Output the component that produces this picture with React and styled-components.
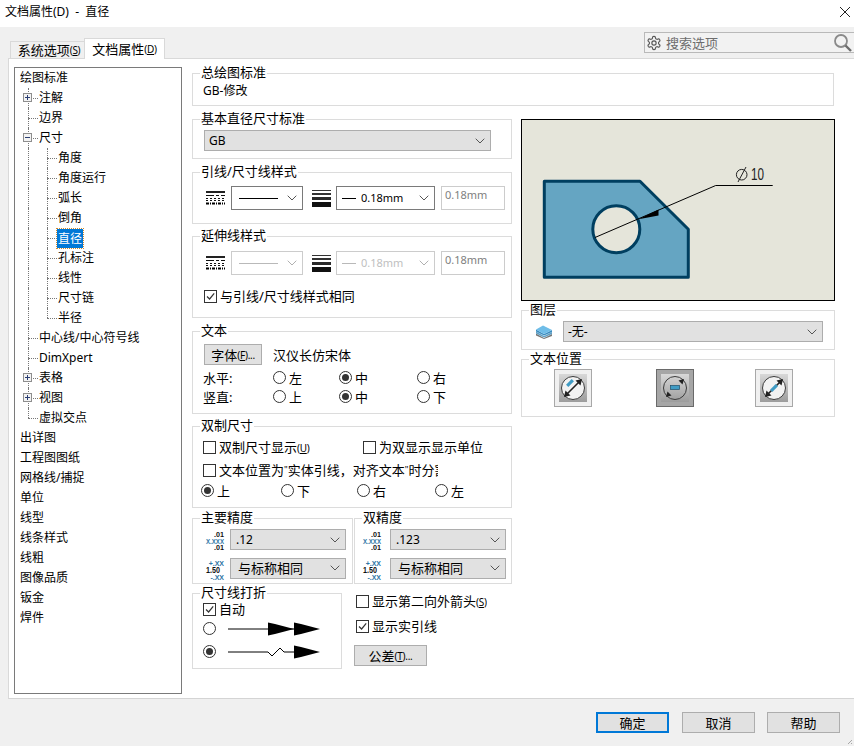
import React from 'react'
import styled, { createGlobalStyle } from 'styled-components'

const GlobalStyle = createGlobalStyle`
  html, body { margin: 0; padding: 0; background: #fff; }
  body {
    width: 854px; height: 746px; overflow: hidden;
    font-family: "Noto Sans", "Noto Sans CJK SC", sans-serif;
    font-size: 13px; color: #000;
  }
  * { box-sizing: border-box; }
`

const Dialog = styled.div`
  width: 854px; height: 746px;
  display: flex; flex-direction: column;
  background: #f0f0f0;
`
const TitleBar = styled.div`
  height: 27px; flex: none; background: #fff;
  display: flex; align-items: center; justify-content: space-between;
  padding: 0 3px 3px 5px; line-height: 16px; font-size: 12px;
  span { white-space: pre; }
`
const TopStrip = styled.div`
  height: 31px; flex: none;
  display: flex; justify-content: space-between; align-items: flex-end;
  padding-left: 10px;
`
const Tabs = styled.div`
  display: flex; align-items: flex-end; margin-bottom: -1px; position: relative; z-index: 1;
`
const Tab = styled.div`
  height: ${p => (p.$active ? 21 : 18)}px;
  width: ${p => (p.$active ? 81 : 74)}px;
  padding-left: ${p => (p.$active ? 0 : 3)}px;
  background: ${p => (p.$active ? '#fff' : '#f0f0f0')};
  border: 1px solid #d9d9d9;
  border-bottom: ${p => (p.$active ? 'none' : '1px solid #d9d9d9')};
  border-right: ${p => (p.$active ? '1px solid #d9d9d9' : 'none')};
  display: flex; align-items: center; justify-content: center;
  line-height: 16px;
`
const Mnemonic = styled.span`
  font-size: 10px; letter-spacing: -0.3px;
  u { text-underline-offset: 1px; }
`
const SearchBox = styled.div`
  width: 210px; height: 21px; margin-bottom: 5px;
  background: #f2f2f2; border: 1px solid #b9b9b9; border-right: none;
  display: flex; align-items: center; padding: 0 2px 0 1px; color: #6d6d6d;
  span { flex: 1; margin-left: 4px; }
`
const Panel = styled.div`
  flex: 1; margin-left: 8px; background: #fff;
  border-top: 1px solid #d9d9d9; border-left: 1px solid #d9d9d9; border-bottom: 1px solid #d4d4d4;
  display: flex; padding: 8px 0 0 5px;
`
const TreeBox = styled.div`
  width: 168px; height: 627px; flex: none;
  border: 1px solid #7a7a7a; font-size: 12px;
`
const TreeRow = styled.div`
  position: relative; height: 20px;
  padding-left: ${p => [5, 24, 43][p.$level]}px;
  display: flex; align-items: center; line-height: 18px; white-space: nowrap;
`
const GuideV = styled.i`
  position: absolute; top: 0; width: 0;
  left: ${p => p.$x}px;
  height: ${p => (p.$half ? 10 : 20)}px;
  border-left: 1px dotted #777;
`
const GuideH = styled.i`
  position: absolute; top: 10px; height: 0;
  left: ${p => p.$x}px; width: 10px;
  border-top: 1px dotted #777;
`
const Expander = styled.b`
  position: absolute; left: 8px; top: 5px; width: 9px; height: 9px;
  background: #f3f3f3; border: 1px solid #8e8e8e; z-index: 1;
  &::before { content: ""; position: absolute; left: 1px; top: 3px; width: 5px; height: 1px; background: #2b3f73; }
  &::after {
    content: ""; position: absolute; left: 3px; top: 1px; width: 1px; height: 5px;
    background: ${p => (p.$open ? 'transparent' : '#2b3f73')};
  }
`
const TreeLabel = styled.span`
  ${p => p.$selected && `
    background: #0078d7; color: #fff; outline: 1px dotted #d08a30;
    padding: 0 1px; margin-left: -1px; line-height: 19px;
  `}
`
const Content = styled.div`
  width: 642px; margin-left: 10px; padding-top: 6px;
`
const Group = styled.div`
  position: relative; flex: none;
  width: ${p => (p.$w ? `${p.$w}px` : 'auto')};
  height: ${p => p.$h}px;
  margin-top: ${p => p.$mt || 0}px;
  border: 1px solid #dcdcdc;
  padding: ${p => p.$pad || '0'};
`
const Legend = styled.div`
  position: absolute; left: 7px; top: -10px; background: #fff; padding: 0 1px; line-height: 16px; white-space: nowrap;
`
const Plain = styled.div`
  height: 100%; display: flex; align-items: center; padding: 0 0 0 10px; font-size: 12px;
`
const Columns = styled.div`
  display: flex; gap: 9px; margin-top: 13px;
`
const Column = styled.div`
  width: ${p => p.$w}px; flex: none;
`
const Select = styled.div`
  width: ${p => p.$w}px; height: ${p => p.$h || 21}px; flex: none;
  display: flex; align-items: center; justify-content: space-between;
  padding: 0 5px ${p => (p.$size ? 2 : 0)}px ${p => p.$indent || 4}px;
  border: 1px solid ${p => (p.$kind === 'white' ? '#7a7a7a' : p.$kind === 'off' ? '#cccccc' : '#adadad')};
  background: ${p => (p.$kind === 'white' || p.$kind === 'off' ? '#fff' : '#e1e1e1')};
  color: ${p => (p.$kind === 'off' ? '#c0c0c0' : '#000')};
  font-size: ${p => p.$size || 12}px;
  line-height: 16px; white-space: nowrap;
`
const LineSample = styled.i`
  display: block; flex: none; height: 1px;
  width: ${p => p.$w}px;
  background: ${p => (p.$off ? '#b9b9b9' : '#000')};
  margin-right: ${p => p.$mr || 0}px;
`
const SelectValue = styled.span`
  flex: 1; display: flex; align-items: center;
`
const StyleRow = styled.div`
  display: flex; align-items: center;
`
const IconSlot = styled.div`
  flex: none; width: ${p => p.$w}px; padding-left: ${p => p.$pl || 0}px;
  display: flex; align-items: center;
`
const ValueInput = styled.div`
  width: 64px; height: 24px; margin-left: 6px; flex: none;
  border: 1px solid #cccccc; background: #fff; color: #808080;
  padding: 0 0 0 3px; line-height: 16px; font-size: 11px;
`
const CheckRow = styled.label`
  display: flex; align-items: center; height: 18px; white-space: nowrap; line-height: 16px;
  width: ${p => (p.$w ? `${p.$w}px` : 'auto')};
  margin-top: ${p => p.$mt || 0}px;
  margin-left: ${p => p.$ml || 0}px;
  overflow: hidden;
`
const Box = styled.span`
  width: 13px; height: 13px; flex: none; margin-right: 3px;
  border: 1px solid #333; background: #fff;
  display: flex; align-items: center; justify-content: center;
`
const Quote = styled.span`
  font-size: 9px; vertical-align: 2px;
`
const RadioItem = styled.label`
  display: flex; align-items: center; height: 19px; white-space: nowrap;
`
const Dot = styled.span`
  width: 13px; height: 13px; flex: none; margin-right: ${p => p.$mr ?? 3}px;
  border-radius: 50%; border: 1px solid #333; background: #fff;
  display: flex; align-items: center; justify-content: center;
  &::after {
    content: ""; width: 7px; height: 7px; border-radius: 50%;
    background: ${p => (p.$on ? '#333' : 'transparent')};
  }
`
const PushButton = styled.div`
  width: ${p => p.$w}px; height: ${p => p.$h || 21}px; flex: none;
  background: #e1e1e1; border: ${p => (p.$primary ? '2px solid #0078d7' : '1px solid #adadad')};
  display: flex; align-items: center; justify-content: center;
  line-height: 16px; white-space: nowrap;
  margin-top: ${p => p.$mt || 0}px;
  margin-left: ${p => p.$ml || 0}px;
`
const FontRow = styled.div`
  display: flex; align-items: center; gap: 11px;
`
const RadioGrid = styled.div`
  display: grid;
  grid-template-columns: ${p => p.$cols};
  margin-top: ${p => p.$mt || 0}px;
  margin-left: ${p => p.$ml || 0}px;
  align-items: center;
`
const TwoGroups = styled.div`
  display: flex; gap: 1px; margin-top: 10px;
`
const PrecisionRow = styled.div`
  display: flex; align-items: center; height: 21px; margin-top: ${p => p.$mt || 0}px;
`
const BreakRow = styled.div`
  display: flex; gap: 12px; margin-top: 9px;
`
const SideOptions = styled.div`
  display: flex; flex-direction: column; align-items: flex-start; margin-top: -1px;
`
const Preview = styled.div`
  width: 314px; height: 182px; border: 1px solid #000; background: #e5e5da;
`
const ArrowRow = styled.div`
  display: flex; align-items: center; height: 18px; margin-top: ${p => p.$mt || 0}px;
`
const PositionRow = styled.div`
  display: grid; grid-template-columns: 102px 99px 38px;
`
const PositionButton = styled.div`
  width: 38px; height: 38px;
  border: 1px solid ${p => (p.$on ? '#6a6a6a' : '#a8a8a8')};
  background: ${p => (p.$on ? '#a6a6a6' : '#f0f0f0')};
  padding: 4px;
`
const Footer = styled.div`
  height: 47px; flex: none; position: relative;
  display: flex; justify-content: flex-end; align-items: flex-start;
  gap: 13px; padding: 13px 14px 0 0;
`
const Grip = styled.svg`
  position: absolute; right: 1px; bottom: 1px;
`
const SmallValue = styled.span`
  font-size: 11px;
`

const M = ({ c, dots }) => <Mnemonic>(<u>{c}</u>){dots}</Mnemonic>

const Chevron = ({ off }) => (
  <svg width="10" height="6" viewBox="0 0 10 6" style={{ flex: 'none' }}>
    <path d="M.7.7 5 5 9.3.7" fill="none" stroke={off ? '#b0b0b0' : '#555'} strokeWidth="1" />
  </svg>
)

const Check = () => (
  <svg width="11" height="11" viewBox="0 0 11 11">
    <path d="M2 5.5 4.6 8 9.2 2.4" fill="none" stroke="#333" strokeWidth="1.2" />
  </svg>
)

const LineStyleIcon = () => (
  <svg width="19" height="14" viewBox="0 0 19 14" style={{ display: 'block' }}>
    <rect x="0" y="0" width="19" height="2" fill="#222" />
    <path d="M0 4.5h8M10 4.5h3M15 4.5h4" stroke="#111" />
    <path d="M0 7.5h19" stroke="#111" strokeDasharray="2 2" />
    <path d="M0 9.5h19" stroke="#111" strokeDasharray="2 2" />
    <path d="M0 12.5h19" stroke="#000" strokeDasharray="3 1 1 1" strokeWidth="2" />
  </svg>
)

const LineWeightIcon = () => (
  <svg width="19" height="17" viewBox="0 0 19 17" style={{ display: 'block' }}>
    <rect y="0" width="19" height="1" fill="#333" />
    <rect y="3" width="19" height="2" fill="#333" />
    <rect y="7" width="19" height="3" fill="#2a2a2a" />
    <rect y="12" width="19" height="5" fill="#111" />
  </svg>
)

const DualIcon = () => (
  <svg width="20" height="19" viewBox="0 0 20 19" style={{ display: 'block', marginTop: 3, overflow: 'visible' }} fontFamily="Liberation Sans, sans-serif" fontSize="7" fontWeight="700">
    <text x="19" y="5" textAnchor="end" fill="#111" textLength="10" lengthAdjust="spacingAndGlyphs">.01</text>
    <text x="1" y="12" fontSize="8" fill="#2e75a5" textLength="18" lengthAdjust="spacingAndGlyphs">X.XXX</text>
    <text x="19" y="18" textAnchor="end" fill="#111" textLength="10" lengthAdjust="spacingAndGlyphs">.01</text>
  </svg>
)

const ToleranceIcon = () => (
  <svg width="20" height="20" viewBox="0 0 20 20" style={{ display: 'block', marginTop: 2, overflow: 'visible' }} fontFamily="Liberation Sans, sans-serif" fontWeight="700">
    <text x="19" y="6" textAnchor="end" fontSize="7" fill="#2e75a5">+.XX</text>
    <text x="1" y="13" fontSize="8.5" fill="#111" textLength="14" lengthAdjust="spacingAndGlyphs">1.50</text>
    <text x="19" y="20" textAnchor="end" fontSize="7" fill="#2e75a5">-.XX</text>
  </svg>
)

const GearIcon = () => (
  <svg width="16" height="16" viewBox="0 0 24 24" fill="none" stroke="#555" strokeWidth="1.7" style={{ flex: 'none' }}>
    <path d="M12.2 2h-.4a2 2 0 0 0-2 2v.2a2 2 0 0 1-1 1.7l-.4.3a2 2 0 0 1-2 0l-.2-.1a2 2 0 0 0-2.7.7l-.2.4a2 2 0 0 0 .7 2.7l.2.1a2 2 0 0 1 1 1.7v.6a2 2 0 0 1-1 1.7l-.2.1a2 2 0 0 0-.7 2.7l.2.4a2 2 0 0 0 2.7.7l.2-.1a2 2 0 0 1 2 0l.4.3a2 2 0 0 1 1 1.7v.2a2 2 0 0 0 2 2h.4a2 2 0 0 0 2-2v-.2a2 2 0 0 1 1-1.7l.4-.3a2 2 0 0 1 2 0l.2.1a2 2 0 0 0 2.7-.7l.2-.4a2 2 0 0 0-.7-2.7l-.2-.1a2 2 0 0 1-1-1.7v-.6a2 2 0 0 1 1-1.7l.2-.1a2 2 0 0 0 .7-2.7l-.2-.4a2 2 0 0 0-2.7-.7l-.2.1a2 2 0 0 1-2 0l-.4-.3a2 2 0 0 1-1-1.7V4a2 2 0 0 0-2-2Z" />
    <circle cx="12" cy="12" r="3.2" />
  </svg>
)

const SearchIcon = () => (
  <svg width="19" height="19" viewBox="0 0 19 19" fill="none" style={{ flex: 'none' }}>
    <circle cx="8" cy="8" r="6" stroke="#8a8a8a" strokeWidth="1.8" />
    <path d="M12.5 12.5 18 18" stroke="#6d6d6d" strokeWidth="2.4" />
  </svg>
)

const LayerIcon = () => (
  <svg width="18" height="14" viewBox="0 0 18 14" style={{ display: 'block' }}>
    <path d="M1 8.5 9 13 17 9V11L9 14 1 10.5Z" fill="#777" />
    <path d="M1 6.5 9 11 17 7V9L9 12.5 1 8.5Z" fill="#5f9fc4" />
    <path d="M1 4.5 9 9 17 5V7L9 10.5 1 6.5Z" fill="#3b8dc0" />
    <path d="M1 4.5 8 .5 17 5 9 9Z" fill="#6fbde8" />
  </svg>
)

const BreakArrow = ({ zigzag }) => (
  <svg width="94" height="18" viewBox="0 0 94 18" style={{ display: 'block', marginLeft: 12, marginTop: 2 }}>
    {zigzag
      ? <path d="M0 9H40L44 13 52 5 56 9H68" fill="none" stroke="#000" />
      : <path d="M0 9H68" fill="none" stroke="#000" />}
    {!zigzag && <path d="M40 2.5 47 4 66 9 47 14 40 15.5Z" fill="#000" />}
    <path d="M66 2.5 73 4 92 9 73 14 66 15.5Z" fill="#000" />
  </svg>
)

const PositionIcon = ({ mode }) => (
  <svg width="28" height="28" viewBox="0 0 28 28" style={{ display: 'block' }}>
    <defs>
      <linearGradient id={`pos-${mode}`} x1="0" y1="0" x2="0" y2="1">
        <stop offset="0" stopColor="#d8d8d8" />
        <stop offset="1" stopColor="#9c9c9c" />
      </linearGradient>
    </defs>
    <rect width="28" height="28" fill={`url(#pos-${mode})`} />
    <circle cx="14" cy="14" r="11.5" fill={mode === 'center' ? 'none' : '#f2f2f2'} stroke="#3c3c3c" />
    {mode === 'center' ? (
      <>
        <path d="M23 5 17.5 6.5 21.5 10.5Z M5 23 10.5 21.5 6.5 17.5Z" fill="#222" />
        <rect x="9.5" y="11.5" width="9" height="4" fill="#3f9bc4" stroke="#1f4f6b" strokeWidth=".7" />
      </>
    ) : (
      <>
        <path d="M7 21 21 7" stroke="#222" strokeWidth="1.6" />
        <path d="M23 5 16.5 6.5 21.5 11.5Z M5 23 11.5 21.5 6.5 16.5Z" fill="#222" />
        <rect x="-4" y="-1.6" width="8" height="3.2" fill="#3f9bc4"
          transform={mode === 'above' ? 'translate(11 9) rotate(-45)' : 'translate(14 14) rotate(-45)'} />
      </>
    )}
  </svg>
)

const Part = () => (
  <svg width="312" height="180" viewBox="522 120 312 180" style={{ display: 'block' }}>
    <path d="M544.3 181.3H640L688.3 229.3V277.3H544.3Z" fill="#65a5c2" stroke="#003f60" strokeWidth="3" strokeLinejoin="round" />
    <circle cx="616.3" cy="229.3" r="23.5" fill="#e5e5da" stroke="#003f60" strokeWidth="3" />
    <path d="M595 237.5 715.7 185.5H772.7" fill="none" stroke="#000" />
    <path d="M638.5 219.3 658.5 209.5 658.5 215.5Z" fill="#000" />
    <circle cx="741.7" cy="174.7" r="5.3" fill="none" stroke="#222" />
    <path d="M738 182 746 167" stroke="#222" />
    <text x="751" y="180" fontFamily="Liberation Sans, sans-serif" fontSize="16" fill="#222" textLength="13" lengthAdjust="spacingAndGlyphs">10</text>
  </svg>
)

const treeItems = [
  { text: '绘图标准', level: 0 },
  { text: '注解', level: 1, exp: 'plus' },
  { text: '边界', level: 1 },
  { text: '尺寸', level: 1, exp: 'minus' },
  { text: '角度', level: 2 },
  { text: '角度运行', level: 2 },
  { text: '弧长', level: 2 },
  { text: '倒角', level: 2 },
  { text: '直径', level: 2, selected: true },
  { text: '孔标注', level: 2 },
  { text: '线性', level: 2 },
  { text: '尺寸链', level: 2 },
  { text: '半径', level: 2, last2: true },
  { text: '中心线/中心符号线', level: 1 },
  { text: 'DimXpert', level: 1 },
  { text: '表格', level: 1, exp: 'plus' },
  { text: '视图', level: 1, exp: 'plus' },
  { text: '虚拟交点', level: 1, last1: true },
  { text: '出详图', level: 0 },
  { text: '工程图图纸', level: 0 },
  { text: '网格线/捕捉', level: 0 },
  { text: '单位', level: 0 },
  { text: '线型', level: 0 },
  { text: '线条样式', level: 0 },
  { text: '线粗', level: 0 },
  { text: '图像品质', level: 0 },
  { text: '钣金', level: 0 },
  { text: '焊件', level: 0 },
]

const Tree = () => (
  <TreeBox>
    {treeItems.map(item => (
      <TreeRow key={item.text} $level={item.level}>
        {item.level > 0 && <GuideV $x={13} $half={item.last1} />}
        {item.level === 1 && <GuideH $x={13} />}
        {item.level === 2 && <GuideV $x={32} $half={item.last2} />}
        {item.level === 2 && <GuideH $x={32} />}
        {item.exp && <Expander $open={item.exp === 'minus'} />}
        <TreeLabel $selected={item.selected}>{item.text}</TreeLabel>
      </TreeRow>
    ))}
  </TreeBox>
)

const Checkbox = ({ on, children, ...rest }) => (
  <CheckRow {...rest}>
    <Box>{on && <Check />}</Box>
    <span>{children}</span>
  </CheckRow>
)

const Radio = ({ on, children }) => (
  <RadioItem>
    <Dot $on={on} />
    <span>{children}</span>
  </RadioItem>
)

const LineRow = ({ off }) => {
  const kind = off ? 'off' : 'white'
  return (
    <StyleRow>
      <IconSlot $w={25}><LineStyleIcon /></IconSlot>
      <Select $w={72} $h={24} $kind={kind} $indent={7}>
        <SelectValue><LineSample $w={39} $off={off} /></SelectValue>
        <Chevron off={off} />
      </Select>
      <IconSlot $w={33} $pl={9}><LineWeightIcon /></IconSlot>
      <Select $w={99} $h={24} $kind={kind} $indent={5}>
        <SelectValue><LineSample $w={14} $off={off} $mr={5} /><SmallValue>0.18mm</SmallValue></SelectValue>
        <Chevron off={off} />
      </Select>
      <ValueInput>0.18mm</ValueInput>
    </StyleRow>
  )
}

const PrecisionGroup = ({ title, w, pad, slot, first, second }) => (
  <Group $w={w} $h={66} $pad={pad}>
    <Legend>{title}</Legend>
    <PrecisionRow>
      <IconSlot $w={slot}><DualIcon /></IconSlot>
      <Select $w={116} $indent={5}>{first}<Chevron /></Select>
    </PrecisionRow>
    <PrecisionRow $mt={8}>
      <IconSlot $w={slot}><ToleranceIcon /></IconSlot>
      <Select $w={116} $indent={7} $size={13}>{second}<Chevron /></Select>
    </PrecisionRow>
  </Group>
)

export default function App() {
  return (
    <Dialog>
      <GlobalStyle />
      <TitleBar>
        <span>文档属性(D)  -  直径</span>
        <svg width="12" height="12" viewBox="0 0 12 12">
          <path d="M1 1 11 11M11 1 1 11" stroke="#222" strokeWidth="1" />
        </svg>
      </TitleBar>
      <TopStrip>
        <Tabs>
          <Tab>系统选项<M c="S" /></Tab>
          <Tab $active>文档属性<M c="D" /></Tab>
        </Tabs>
        <SearchBox>
          <GearIcon />
          <span>搜索选项</span>
          <SearchIcon />
        </SearchBox>
      </TopStrip>
      <Panel>
        <Tree />
        <Content>
          <Group $h={33}>
            <Legend>总绘图标准</Legend>
            <Plain>GB-修改</Plain>
          </Group>
          <Columns>
            <Column $w={320}>
              <Group $h={40} $pad="10px 0 0 11px">
                <Legend>基本直径尺寸标准</Legend>
                <Select $w={287} $indent={4}>GB<Chevron /></Select>
              </Group>
              <Group $h={52} $mt={13} $pad="13px 0 0 13px">
                <Legend>引线/尺寸线样式</Legend>
                <LineRow />
              </Group>
              <Group $h={82} $mt={12} $pad="14px 0 0 13px">
                <Legend>延伸线样式</Legend>
                <LineRow off />
                <Checkbox on $mt={12} $ml={-2}>与引线/尺寸线样式相同</Checkbox>
              </Group>
              <Group $h={83} $mt={13} $pad="12px 0 0 11px">
                <Legend>文本</Legend>
                <FontRow>
                  <PushButton $w={58}>字体<M c="F" dots="..." /></PushButton>
                  <span>汉仪长仿宋体</span>
                </FontRow>
                <RadioGrid $cols="70px 66px 78px 1fr" $mt={3} $ml={-1}>
                  <span>水平:</span>
                  <Radio>左</Radio>
                  <Radio on>中</Radio>
                  <Radio>右</Radio>
                  <span>竖直:</span>
                  <Radio>上</Radio>
                  <Radio on>中</Radio>
                  <Radio>下</Radio>
                </RadioGrid>
              </Group>
              <Group $h={82} $mt={12} $pad="11px 0 0 10px">
                <Legend>双制尺寸</Legend>
                <RadioGrid $cols="160px 1fr">
                  <Checkbox>双制尺寸显示<M c="U" /></Checkbox>
                  <Checkbox>为双显示显示单位</Checkbox>
                </RadioGrid>
                <Checkbox $w={235} $mt={5}>文本位置为<Quote>"</Quote>实体引线，对齐文本<Quote>"</Quote>时分割</Checkbox>
                <RadioGrid $cols="80px 76px 78px 1fr" $mt={2} $ml={-2}>
                  <Radio on>上</Radio>
                  <Radio>下</Radio>
                  <Radio>右</Radio>
                  <Radio>左</Radio>
                </RadioGrid>
              </Group>
              <TwoGroups>
                <PrecisionGroup title="主要精度" w={161} pad="10px 0 0 12px" slot={25} first=".12" second="与标称相同" />
                <PrecisionGroup title="双精度" w={158} pad="10px 0 0 7px" slot={28} first=".123" second="与标称相同" />
              </TwoGroups>
              <BreakRow>
                <Group $w={150} $h={76} $pad="6px 0 0 10px">
                  <Legend>尺寸线打折</Legend>
                  <Checkbox on>自动</Checkbox>
                  <ArrowRow $mt={1}><Dot $mr={0} /><BreakArrow /></ArrowRow>
                  <ArrowRow $mt={5}><Dot $on $mr={0} /><BreakArrow zigzag /></ArrowRow>
                </Group>
                <SideOptions>
                  <Checkbox $ml={2}>显示第二向外箭头<M c="S" /></Checkbox>
                  <Checkbox on $ml={2} $mt={7}>显示实引线</Checkbox>
                  <PushButton $w={73} $mt={10}>公差<M c="T" dots="..." /></PushButton>
                </SideOptions>
              </BreakRow>
            </Column>
            <Column $w={314}>
              <Preview><Part /></Preview>
              <Group $h={40} $mt={9} $pad="10px 0 0 13px">
                <Legend>图层</Legend>
                <StyleRow>
                  <IconSlot $w={28}><LayerIcon /></IconSlot>
                  <Select $w={260} $indent={4}>-无-<Chevron /></Select>
                </StyleRow>
              </Group>
              <Group $h={58} $mt={9} $pad="9px 0 0 32px">
                <Legend>文本位置</Legend>
                <PositionRow>
                  <PositionButton><PositionIcon mode="above" /></PositionButton>
                  <PositionButton $on><PositionIcon mode="center" /></PositionButton>
                  <PositionButton><PositionIcon mode="inline" /></PositionButton>
                </PositionRow>
              </Group>
            </Column>
          </Columns>
        </Content>
      </Panel>
      <Footer>
        <PushButton $w={73} $primary>确定</PushButton>
        <PushButton $w={73}>取消</PushButton>
        <PushButton $w={73} $ml={-1}>帮助</PushButton>
        <Grip width="8" height="8" viewBox="0 0 8 8">
          <path d="M7 3 3 7M7 6 6 7" stroke="#a8a8a8" />
        </Grip>
      </Footer>
    </Dialog>
  )
}
